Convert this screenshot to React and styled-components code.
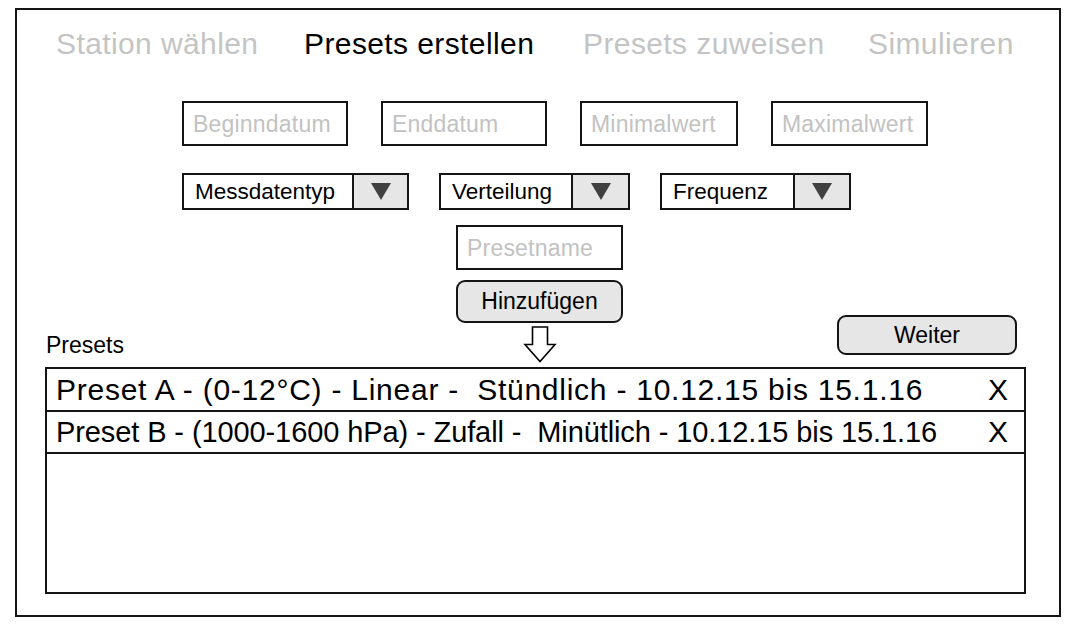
import React from "react";
import styled, { createGlobalStyle } from "styled-components";

const Global = createGlobalStyle`
  html, body { margin: 0; padding: 0; background: #ffffff; }
  body { font-family: "Liberation Sans", Arial, sans-serif; }
  * { box-sizing: border-box; }
`;

const Frame = styled.div`
  margin: 8px 0 0 15px;
  width: 1046px;
  height: 609px;
  border: 2px solid #151515;
  display: flex;
  flex-direction: column;
`;

const Tabs = styled.nav`
  display: flex;
  padding-left: 39px;
  margin-top: 16px;
  height: 36px;
  align-items: center;
`;

const Tab = styled.span`
  flex: 0 0 ${(p) => (p.$w ? `${p.$w}px` : "auto")};
  font-size: 30px;
  line-height: 36px;
  letter-spacing: 0.4px;
  color: ${(p) => (p.$active ? "#000000" : "#c4c4c4")};
  white-space: nowrap;
`;

const InputRow = styled.div`
  display: flex;
  gap: ${(p) => p.$gap || 33}px;
  padding-left: ${(p) => p.$left}px;
  margin-top: ${(p) => p.$top}px;
`;

const TextBox = styled.div`
  width: ${(p) => p.$w}px;
  height: ${(p) => p.$h || 45}px;
  border: 2px solid #151515;
  display: flex;
  align-items: center;
  padding: 2px 0 0 9px;
  font-size: 23px;
  letter-spacing: 0.2px;
  color: #c2c2c2;
  white-space: nowrap;
`;

const Select = styled.div`
  width: ${(p) => p.$w}px;
  height: 37px;
  border: 2px solid #151515;
  display: flex;
`;

const SelectLabel = styled.div`
  flex: 1;
  display: flex;
  align-items: center;
  padding: 1px 0 0 11px;
  font-size: 22.5px;
  color: #000;
  white-space: nowrap;
`;

const SelectArrow = styled.div`
  width: ${(p) => p.$aw}px;
  border-left: 2px solid #151515;
  background: #e6e6e6;
  display: flex;
  align-items: center;
  justify-content: center;
`;

const Triangle = styled.span`
  width: 0;
  height: 0;
  border-left: 10px solid transparent;
  border-right: 10px solid transparent;
  border-top: 17px solid #404040;
`;

const Middle = styled.div`
  display: grid;
  grid-template-columns: 439px 167px 1fr;
  margin-top: 15px;
`;

const LabelCell = styled.div`
  align-self: end;
  padding-left: 29px;
  font-size: 23px;
  line-height: 26px;
  margin-bottom: 5px;
  color: #000;
`;

const Stack = styled.div`
  display: flex;
  flex-direction: column;
  align-items: center;
`;

const Button = styled.div`
  width: ${(p) => p.$w}px;
  height: ${(p) => p.$h}px;
  border: 2px solid #151515;
  border-radius: 9px;
  background: #e6e6e6;
  display: flex;
  align-items: center;
  justify-content: center;
  font-size: 23px;
  color: #000;
`;

const AddButton = styled(Button)`
  margin-top: 10px;
`;

const ArrowIcon = styled.svg`
  display: block;
  margin-top: 3px;
`;

const RightCell = styled.div`
  align-self: end;
  padding-left: 214px;
  margin-bottom: 8px;
`;

const List = styled.div`
  margin: 4px 0 0 28px;
  width: 981px;
  height: 227px;
  border: 2px solid #151515;
  display: flex;
  flex-direction: column;
`;

const Row = styled.div`
  height: ${(p) => p.$h}px;
  border-bottom: 2px solid #151515;
  display: flex;
  align-items: center;
  justify-content: space-between;
  padding: 0 16px 0 9px;
  color: #000;
`;

const RowText = styled.span`
  font-size: ${(p) => p.$size}px;
  letter-spacing: ${(p) => p.$ls}px;
  white-space: pre;
`;

const Remove = styled.span`
  font-size: 30px;
`;

export default function App() {
  return (
    <>
      <Global />
      <Frame>
        <Tabs>
          <Tab $w={248}>Station wählen</Tab>
          <Tab $w={279} $active>Presets erstellen</Tab>
          <Tab $w={285}>Presets zuweisen</Tab>
          <Tab>Simulieren</Tab>
        </Tabs>
        <InputRow $left={165} $top={39} $gap={33}>
          <TextBox $w={166}>Beginndatum</TextBox>
          <TextBox $w={166}>Enddatum</TextBox>
          <TextBox $w={158}>Minimalwert</TextBox>
          <TextBox $w={157}>Maximalwert</TextBox>
        </InputRow>
        <InputRow $left={165} $top={27} $gap={30}>
          <Select $w={227}>
            <SelectLabel>Messdatentyp</SelectLabel>
            <SelectArrow $aw={55}><Triangle /></SelectArrow>
          </Select>
          <Select $w={191}>
            <SelectLabel>Verteilung</SelectLabel>
            <SelectArrow $aw={57}><Triangle /></SelectArrow>
          </Select>
          <Select $w={191}>
            <SelectLabel>Frequenz</SelectLabel>
            <SelectArrow $aw={56}><Triangle /></SelectArrow>
          </Select>
        </InputRow>
        <Middle>
          <LabelCell>Presets</LabelCell>
          <Stack>
            <TextBox $w={167}>Presetname</TextBox>
            <AddButton $w={167} $h={43}>Hinzufügen</AddButton>
            <ArrowIcon width="34" height="37" viewBox="0 0 34 37">
              <path
                d="M9.5 1 H24.5 V18.5 H32 L17 35.5 L2 18.5 H9.5 Z"
                fill="#ffffff"
                stroke="#000000"
                strokeWidth="1.6"
                strokeLinejoin="miter"
              />
            </ArrowIcon>
          </Stack>
          <RightCell>
            <Button $w={180} $h={40}>Weiter</Button>
          </RightCell>
        </Middle>
        <List>
          <Row $h={43}>
            <RowText $size={30} $ls={0.75}>Preset A - (0-12°C) - Linear -  Stündlich - 10.12.15 bis 15.1.16</RowText>
            <Remove>X</Remove>
          </Row>
          <Row $h={42}>
            <RowText $size={29} $ls={-0.1}>Preset B - (1000-1600 hPa) - Zufall -  Minütlich - 10.12.15 bis 15.1.16</RowText>
            <Remove>X</Remove>
          </Row>
        </List>
      </Frame>
    </>
  );
}
